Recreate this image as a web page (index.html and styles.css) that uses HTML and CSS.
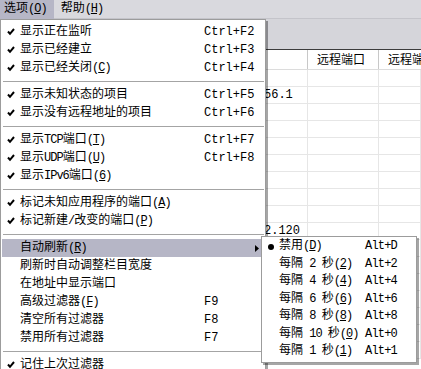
FILE: index.html
```html
<!DOCTYPE html>
<html lang="zh-CN">
<head>
  <meta charset="UTF-8">
  <title>选项</title>
  <link rel="stylesheet" href="styles.css">
</head>
<body>
  <div class="menubar">
    <span class="menubar-item open">选项<span class="lat">(<u>O</u>)</span></span>
    <span class="menubar-item">帮助<span class="lat">(<u>H</u>)</span></span>
  </div>

  <div class="window">
    <div class="toolbar"></div>
    <div class="list">
      <div class="list-head">
        <div class="hcell"></div>
        <div class="hcell"></div>
        <div class="hcell">远程端口</div>
        <div class="hcell">远程端口</div>
      </div>
      <div class="list-row"><div class="cell"></div><div class="cell"></div><div class="cell"></div><div class="cell"></div></div>
      <div class="list-row"><div class="cell"></div><div class="cell">56.1</div><div class="cell"></div><div class="cell"></div></div>
      <div class="list-row"><div class="cell"></div><div class="cell"></div><div class="cell"></div><div class="cell"></div></div>
      <div class="list-row"><div class="cell"></div><div class="cell"></div><div class="cell"></div><div class="cell"></div></div>
      <div class="list-row"><div class="cell"></div><div class="cell"></div><div class="cell"></div><div class="cell"></div></div>
      <div class="list-row"><div class="cell"></div><div class="cell"></div><div class="cell"></div><div class="cell"></div></div>
      <div class="list-row"><div class="cell"></div><div class="cell"></div><div class="cell"></div><div class="cell"></div></div>
      <div class="list-row"><div class="cell"></div><div class="cell"></div><div class="cell"></div><div class="cell"></div></div>
      <div class="list-row"><div class="cell"></div><div class="cell"></div><div class="cell"></div><div class="cell"></div></div>
      <div class="list-row"><div class="cell"></div><div class="cell">2.120</div><div class="cell"></div><div class="cell"></div></div>
      <div class="list-row"><div class="cell"></div><div class="cell"></div><div class="cell"></div><div class="cell"></div></div>
      <div class="list-row"><div class="cell"></div><div class="cell"></div><div class="cell"></div><div class="cell"></div></div>
      <div class="list-row"><div class="cell"></div><div class="cell"></div><div class="cell"></div><div class="cell"></div></div>
      <div class="list-row"><div class="cell"></div><div class="cell"></div><div class="cell"></div><div class="cell"></div></div>
      <div class="list-row"><div class="cell"></div><div class="cell"></div><div class="cell"></div><div class="cell"></div></div>
      <div class="list-row"><div class="cell"></div><div class="cell"></div><div class="cell"></div><div class="cell"></div></div>
      <div class="list-row"><div class="cell"></div><div class="cell"></div><div class="cell"></div><div class="cell"></div></div>
    </div>
  </div>

  <!-- 选项 菜单 -->
  <div class="menu menu-main">
    <div class="menu-item"><span class="mark"><svg class="check" width="8" height="8" viewBox="0 0 8 8"><path d="M1 3.5 L3 5.8 L7 1"/></svg></span><span class="label">显示正在监听</span><span class="key">Ctrl+F2</span></div>
    <div class="menu-item"><span class="mark"><svg class="check" width="8" height="8" viewBox="0 0 8 8"><path d="M1 3.5 L3 5.8 L7 1"/></svg></span><span class="label">显示已经建立</span><span class="key">Ctrl+F3</span></div>
    <div class="menu-item"><span class="mark"><svg class="check" width="8" height="8" viewBox="0 0 8 8"><path d="M1 3.5 L3 5.8 L7 1"/></svg></span><span class="label">显示已经关闭<span class="lat">(<u>C</u>)</span></span><span class="key">Ctrl+F4</span></div>
    <div class="menu-sep"></div>
    <div class="menu-item"><span class="mark"><svg class="check" width="8" height="8" viewBox="0 0 8 8"><path d="M1 3.5 L3 5.8 L7 1"/></svg></span><span class="label">显示未知状态的项目</span><span class="key">Ctrl+F5</span></div>
    <div class="menu-item"><span class="mark"><svg class="check" width="8" height="8" viewBox="0 0 8 8"><path d="M1 3.5 L3 5.8 L7 1"/></svg></span><span class="label">显示没有远程地址的项目</span><span class="key">Ctrl+F6</span></div>
    <div class="menu-sep"></div>
    <div class="menu-item"><span class="mark"><svg class="check" width="8" height="8" viewBox="0 0 8 8"><path d="M1 3.5 L3 5.8 L7 1"/></svg></span><span class="label">显示<span class="lat">TCP</span>端口<span class="lat">(<u>T</u>)</span></span><span class="key">Ctrl+F7</span></div>
    <div class="menu-item"><span class="mark"><svg class="check" width="8" height="8" viewBox="0 0 8 8"><path d="M1 3.5 L3 5.8 L7 1"/></svg></span><span class="label">显示<span class="lat">UDP</span>端口<span class="lat">(<u>U</u>)</span></span><span class="key">Ctrl+F8</span></div>
    <div class="menu-item"><span class="mark"><svg class="check" width="8" height="8" viewBox="0 0 8 8"><path d="M1 3.5 L3 5.8 L7 1"/></svg></span><span class="label">显示<span class="lat">IPv6</span>端口<span class="lat">(<u>6</u>)</span></span><span class="key"></span></div>
    <div class="menu-sep"></div>
    <div class="menu-item"><span class="mark"><svg class="check" width="8" height="8" viewBox="0 0 8 8"><path d="M1 3.5 L3 5.8 L7 1"/></svg></span><span class="label">标记未知应用程序的端口<span class="lat">(<u>A</u>)</span></span><span class="key"></span></div>
    <div class="menu-item"><span class="mark"><svg class="check" width="8" height="8" viewBox="0 0 8 8"><path d="M1 3.5 L3 5.8 L7 1"/></svg></span><span class="label">标记新建<span class="lat">/</span>改变的端口<span class="lat">(<u>P</u>)</span></span><span class="key"></span></div>
    <div class="menu-sep"></div>
    <div class="menu-item active"><span class="mark"></span><span class="label">自动刷新<span class="lat">(<u>R</u>)</span></span><span class="key"><svg class="arrow" width="4" height="7" viewBox="0 0 4 7"><polygon points="0,0 4,3.5 0,7"/></svg></span></div>
    <div class="menu-item"><span class="mark"></span><span class="label">刷新时自动调整栏目宽度</span><span class="key"></span></div>
    <div class="menu-item"><span class="mark"></span><span class="label">在地址中显示端口</span><span class="key"></span></div>
    <div class="menu-item"><span class="mark"></span><span class="label">高级过滤器<span class="lat">(<u>F</u>)</span></span><span class="key">F9</span></div>
    <div class="menu-item"><span class="mark"></span><span class="label">清空所有过滤器</span><span class="key">F8</span></div>
    <div class="menu-item"><span class="mark"></span><span class="label">禁用所有过滤器</span><span class="key">F7</span></div>
    <div class="menu-sep"></div>
    <div class="menu-item"><span class="mark"><svg class="check" width="8" height="8" viewBox="0 0 8 8"><path d="M1 3.5 L3 5.8 L7 1"/></svg></span><span class="label">记住上次过滤器</span><span class="key"></span></div>
  </div>

  <!-- 自动刷新 子菜单 -->
  <div class="menu menu-sub">
    <div class="menu-item"><span class="mark"><svg width="6" height="6" viewBox="0 0 6 6"><circle cx="3" cy="3" r="3"/></svg></span><span class="label">禁用<span class="lat">(<u>D</u>)</span></span><span class="key">Alt+D</span></div>
    <div class="menu-item"><span class="mark"></span><span class="label">每隔<span class="lat"> 2 </span>秒<span class="lat">(<u>2</u>)</span></span><span class="key">Alt+2</span></div>
    <div class="menu-item"><span class="mark"></span><span class="label">每隔<span class="lat"> 4 </span>秒<span class="lat">(<u>4</u>)</span></span><span class="key">Alt+4</span></div>
    <div class="menu-item"><span class="mark"></span><span class="label">每隔<span class="lat"> 6 </span>秒<span class="lat">(<u>6</u>)</span></span><span class="key">Alt+6</span></div>
    <div class="menu-item"><span class="mark"></span><span class="label">每隔<span class="lat"> 8 </span>秒<span class="lat">(<u>8</u>)</span></span><span class="key">Alt+8</span></div>
    <div class="menu-item"><span class="mark"></span><span class="label">每隔<span class="lat"> 10 </span>秒<span class="lat">(<u>0</u>)</span></span><span class="key">Alt+0</span></div>
    <div class="menu-item"><span class="mark"></span><span class="label">每隔<span class="lat"> 1 </span>秒<span class="lat">(<u>1</u>)</span></span><span class="key">Alt+1</span></div>
  </div>
</body>
</html>
```

FILE: styles.css
```css
body {
  margin: 0;
  width: 421px;
  height: 369px;
  overflow: hidden;
  position: relative;
  background: #fff;
  color: #000;
  font-family: "Liberation Mono", "Noto Sans CJK SC", monospace;
  font-size: 12px;
}
.lat {
  letter-spacing: -1px;
}
u {
  text-underline-offset: 1px;
}

/* 菜单栏 */
.menubar {
  display: flex;
  gap: 3px;
  height: 19px;
  background: #d9d9de;
  border-bottom: 1px solid #c4c4ca;
  box-sizing: border-box;
}
.menubar-item {
  padding: 0 7px 0 4px;
  line-height: 19px;
  height: 19px;
}
.menubar-item.open {
  background: #b6b6c6;
}

/* 后面的窗口 */
.toolbar {
  height: 30px;
  background: #d5d5da;
  border-bottom: 1px solid #3c3c3c;
}
.list-head, .list-row {
  display: grid;
  grid-template-columns: 262px 46px 71px 1fr;
}
.list-head {
  height: 19px;
  border-bottom: 1px solid #dcdcdc;
}
.hcell {
  line-height: 19px;
  padding: 2px 0 0 9px;
  border-right: 1px solid #c8c8c8;
  white-space: nowrap;
  overflow: hidden;
}
.hcell:first-child {
  border-right: none;
}
.hcell:last-child {
  border-right: none;
}
.list-row {
  height: 17px;
  border-bottom: 1px solid #e6e6e6;
  box-sizing: border-box;
}
.cell {
  line-height: 16px;
  padding-left: 2px;
  border-right: 1px solid #e6e6e6;
  white-space: nowrap;
}
.cell:first-child {
  border-right: none;
}

/* 弹出菜单 */
.menu {
  position: absolute;
  background: #fff;
  border: 1px solid #9c9c9c;
  box-shadow: 2px 2px 0 rgba(0, 0, 0, 0.35);
  padding: 3px 1px;
}
.menu-main {
  left: 0;
  top: 19px;
  width: 262px;
  height: 360px;
}
.menu-sub {
  left: 261px;
  top: 236px;
  width: 152px;
  padding: 1px 1px;
}
.menu-item {
  display: flex;
  align-items: center;
  height: 18px;
  line-height: 18px;
  white-space: nowrap;
}
.menu-item.active {
  background: #b6b6c6;
}
.mark {
  width: 18px;
  flex: none;
  display: flex;
  justify-content: center;
  align-items: center;
}
.label {
  flex: 1;
}
.key {
  width: 60px;
  flex: none;
  display: flex;
  align-items: center;
}
.check path {
  fill: none;
  stroke: #000;
  stroke-width: 2;
}
.arrow {
  margin-left: 51px;
}
.menu-sep {
  height: 1px;
  margin: 4px 0 4px 1px;
  background: #a4a4a4;
}
.menu-sub .menu-item {
  height: 17.5px;
  line-height: 17.5px;
}
.menu-sub .mark {
  width: 16px;
}
.menu-sub .key {
  width: 50px;
  letter-spacing: -0.8px;
}
```
